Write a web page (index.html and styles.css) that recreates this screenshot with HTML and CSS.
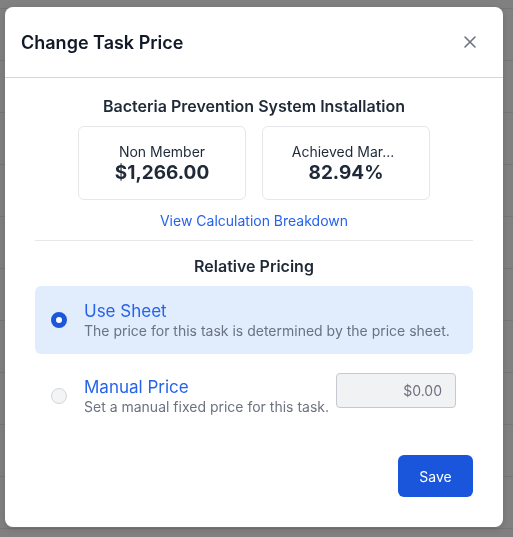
FILE: index.html
```html
<!DOCTYPE html>
<html>
<head>
<meta charset="utf-8">
<link rel="stylesheet" href="styles.css">
</head>
<body>
<div class="backdrop"></div>
<div class="modal">
  <div class="modal-header">
    <h2 class="modal-title">Change Task Price</h2>
    <button class="close-btn" aria-label="Close">
      <svg width="14" height="14" viewBox="0 0 14 14"><path d="M2 2L12 12M12 2L2 12" stroke="#6b7280" stroke-width="1.6" stroke-linecap="round"/></svg>
    </button>
  </div>
  <div class="modal-body">
    <div class="task-name">Bacteria Prevention System Installation</div>
    <div class="cards">
      <div class="card">
        <div class="card-label">Non Member</div>
        <div class="card-value">$1,266.00</div>
      </div>
      <div class="card">
        <div class="card-label shifted">Achieved Mar...</div>
        <div class="card-value">82.94%</div>
      </div>
    </div>
    <a class="link" href="#">View Calculation Breakdown</a>
    <div class="divider"></div>
    <div class="section-title">Relative Pricing</div>
    <div class="option selected">
      <span class="radio checked"></span>
      <div class="option-text">
        <div class="option-title">Use Sheet</div>
        <div class="option-desc">The price for this task is determined by the price sheet.</div>
      </div>
    </div>
    <div class="option">
      <span class="radio"></span>
      <div class="option-text">
        <div class="option-title">Manual Price</div>
        <div class="option-desc">Set a manual fixed price for this task.</div>
      </div>
      <div class="price-input">$0.00</div>
    </div>
    <div class="footer">
      <button class="save-btn">Save</button>
    </div>
  </div>
</div>
</body>
</html>
```
FILE: styles.css
```css
html, body {
  margin: 0;
  padding: 0;
  height: 100%;
}
body {
  background: #808080;
  font-family: Inter, "Noto Sans", sans-serif;
  color: #1f2937;
  overflow: hidden;
}
.backdrop {
  height: 100%;
  background-image: linear-gradient(to bottom, transparent 0, transparent 51px, #767676 51px, #767676 52px);
  background-size: 100% 52px;
  background-position: 0 9px;
}
.modal {
  position: fixed;
  left: 5px;
  top: 7px;
  width: 498px;
  height: 520px;
  background: #fff;
  border-radius: 8px;
  box-shadow: 0 2px 6px rgba(0,0,0,0.15);
  display: flex;
  flex-direction: column;
}
.modal-header {
  height: 70px;
  display: flex;
  align-items: center;
  justify-content: space-between;
  padding: 0 26px 0 16px;
  border-bottom: 1px solid #d1d5db;
}
.modal-title {
  margin: 0;
  font-size: 18px;
  font-weight: 600;
  color: #111827;
}
.close-btn {
  border: 0;
  background: none;
  padding: 0;
  width: 14px;
  height: 14px;
  display: flex;
}
.modal-body {
  padding: 18px 30px 30px;
  display: flex;
  flex-direction: column;
  align-items: center;
  flex: 1;
}
.task-name {
  font-size: 16px;
  font-weight: 600;
  line-height: 20px;
  color: #1f2937;
}
.cards {
  display: flex;
  gap: 16px;
  margin-top: 10px;
}
.card {
  width: 166px;
  height: 72px;
  border: 1px solid #e5e7eb;
  border-radius: 6px;
  display: flex;
  flex-direction: column;
  align-items: center;
  justify-content: center;
}
.card-label {
  font-size: 14px;
  line-height: 19px;
  color: #1f2937;
}
.card-label.shifted {
  margin-right: 6px;
}
.card-value {
  font-size: 19px;
  font-weight: 700;
  line-height: 24px;
  color: #1f2937;
}
.link {
  margin-top: 11px;
  font-size: 14px;
  line-height: 20px;
  color: #2563eb;
  text-decoration: none;
}
.divider {
  align-self: stretch;
  height: 1px;
  background: #e5e7eb;
  margin-top: 9px;
}
.section-title {
  margin-top: 15px;
  font-size: 16px;
  font-weight: 600;
  line-height: 20px;
  color: #1f2937;
}
.option {
  align-self: stretch;
  height: 68px;
  box-sizing: border-box;
  display: flex;
  align-items: center;
  padding: 0 17px 0 16px;
  border-radius: 6px;
  margin-top: 10px;
}
.option + .option {
  margin-top: 8px;
}
.option.selected {
  background: #e1ecfd;
}
.radio {
  width: 16px;
  height: 16px;
  box-sizing: border-box;
  border-radius: 50%;
  border: 1px solid #d1d5db;
  background: #f3f4f6;
  flex-shrink: 0;
}
.radio.checked {
  border: 5px solid #1c56db;
  background: #fff;
}
.option-text {
  margin-left: 17px;
  flex: 1;
}
.option-title {
  font-size: 17px;
  line-height: 22px;
  color: #2563eb;
}
.option-desc {
  font-size: 14px;
  line-height: 18px;
  color: #6b7280;
}
.price-input {
  width: 120px;
  height: 35px;
  box-sizing: border-box;
  border: 1px solid #c5c9d0;
  border-radius: 4px;
  background: #f1f2f4;
  color: #6b7280;
  font-size: 14px;
  display: flex;
  align-items: center;
  justify-content: flex-end;
  padding-right: 13px;
  margin-top: -12px;
}
.footer {
  align-self: stretch;
  display: flex;
  justify-content: flex-end;
  margin-top: auto;
}
.save-btn {
  width: 75px;
  height: 42px;
  border: 0;
  border-radius: 6px;
  background: #1a56db;
  color: #fff;
  font-family: Inter, "Noto Sans", sans-serif;
  font-size: 14px;
}
```
